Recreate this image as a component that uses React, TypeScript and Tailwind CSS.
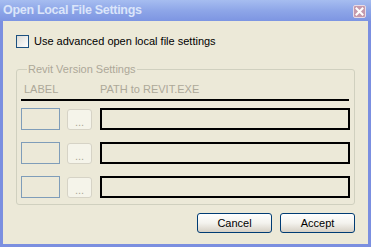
import React from "react";

const rows = [0, 1, 2];

export default function App() {
    return (
        <div className="w-[371px] h-[247px] flex flex-col bg-[#7b8fe0] font-['Liberation_Sans',sans-serif] text-[11px] select-none">
            {/* title bar */}
            <div className="h-[21px] flex items-center justify-between pl-[3px] pr-[5px] bg-gradient-to-b from-[#a6bdf0] via-[#8ea6e8] to-[#7d95e2]">
                <span className="text-[12.5px] font-bold text-[#dbe5fa] tracking-[-0.3px]">Open Local File Settings</span>
                <div className="w-[13px] h-[13px] mt-[2px] rounded-[2px] bg-[#c59aac] border border-[#e8dbe6] flex items-center justify-center">
                    <svg width="9" height="9" viewBox="0 0 9 9">
                        <path d="M1.5 1.5 L7.5 7.5 M7.5 1.5 L1.5 7.5" stroke="#ffffff" strokeWidth="2" strokeLinecap="square" />
                    </svg>
                </div>
            </div>

            {/* body */}
            <div className="flex-1 mx-[3px] mb-[3px] bg-[#ECE9D8] flex flex-col pt-[14px] px-[13px]">
                <label className="flex items-center gap-[5px] h-[13px]">
                    <span className="w-[13px] h-[13px] border border-[#1c5180] bg-gradient-to-br from-[#dcdcd7] to-[#ffffff]" />
                    <span className="text-black">Use advanced open local file settings</span>
                </label>

                <fieldset className="mt-[16px] h-[141px] border border-[#D0D0BF] rounded-[3px] px-[4px]">
                    <legend className="ml-[6px] px-[1px] text-[#aca899] leading-[11px]">Revit Version Settings</legend>
                    <div className="flex items-center h-[14px] mt-[7px] text-[#aca899]">
                        <span className="w-[79px] pl-[3px]">LABEL</span>
                        <span>PATH to REVIT.EXE</span>
                    </div>
                    <div className="h-[2px] bg-black mt-[3px] mr-[1px]" />
                    <div className="flex flex-col gap-[12px] mt-[7px]">
                        {rows.map((r) => (
                            <div key={r} className="flex items-center">
                                <div className="w-[39px] h-[22px] border border-[#7F9DB9]" />
                                <div className="ml-[7px] w-[25px] h-[21px] rounded-[3px] border border-[#d6d3c6] bg-[#f5f4ea] flex items-end justify-center pb-[3px] text-[#aca899] leading-[8px]">
                                    ...
                                </div>
                                <div className="ml-[8px] w-[250px] h-[22px] border-2 border-black" />
                            </div>
                        ))}
                    </div>
                </fieldset>

                <div className="flex justify-end gap-[8px] mt-[8px]">
                    {["Cancel", "Accept"].map((b) => (
                        <button
                            key={b}
                            className="w-[75px] h-[20px] rounded-[3px] border border-[#003c74] bg-gradient-to-b from-[#ffffff] via-[#f4f3ee] to-[#d6d0c5] text-black text-[11px] leading-none"
                        >
                            {b}
                        </button>
                    ))}
                </div>
            </div>
        </div>
    );
}
